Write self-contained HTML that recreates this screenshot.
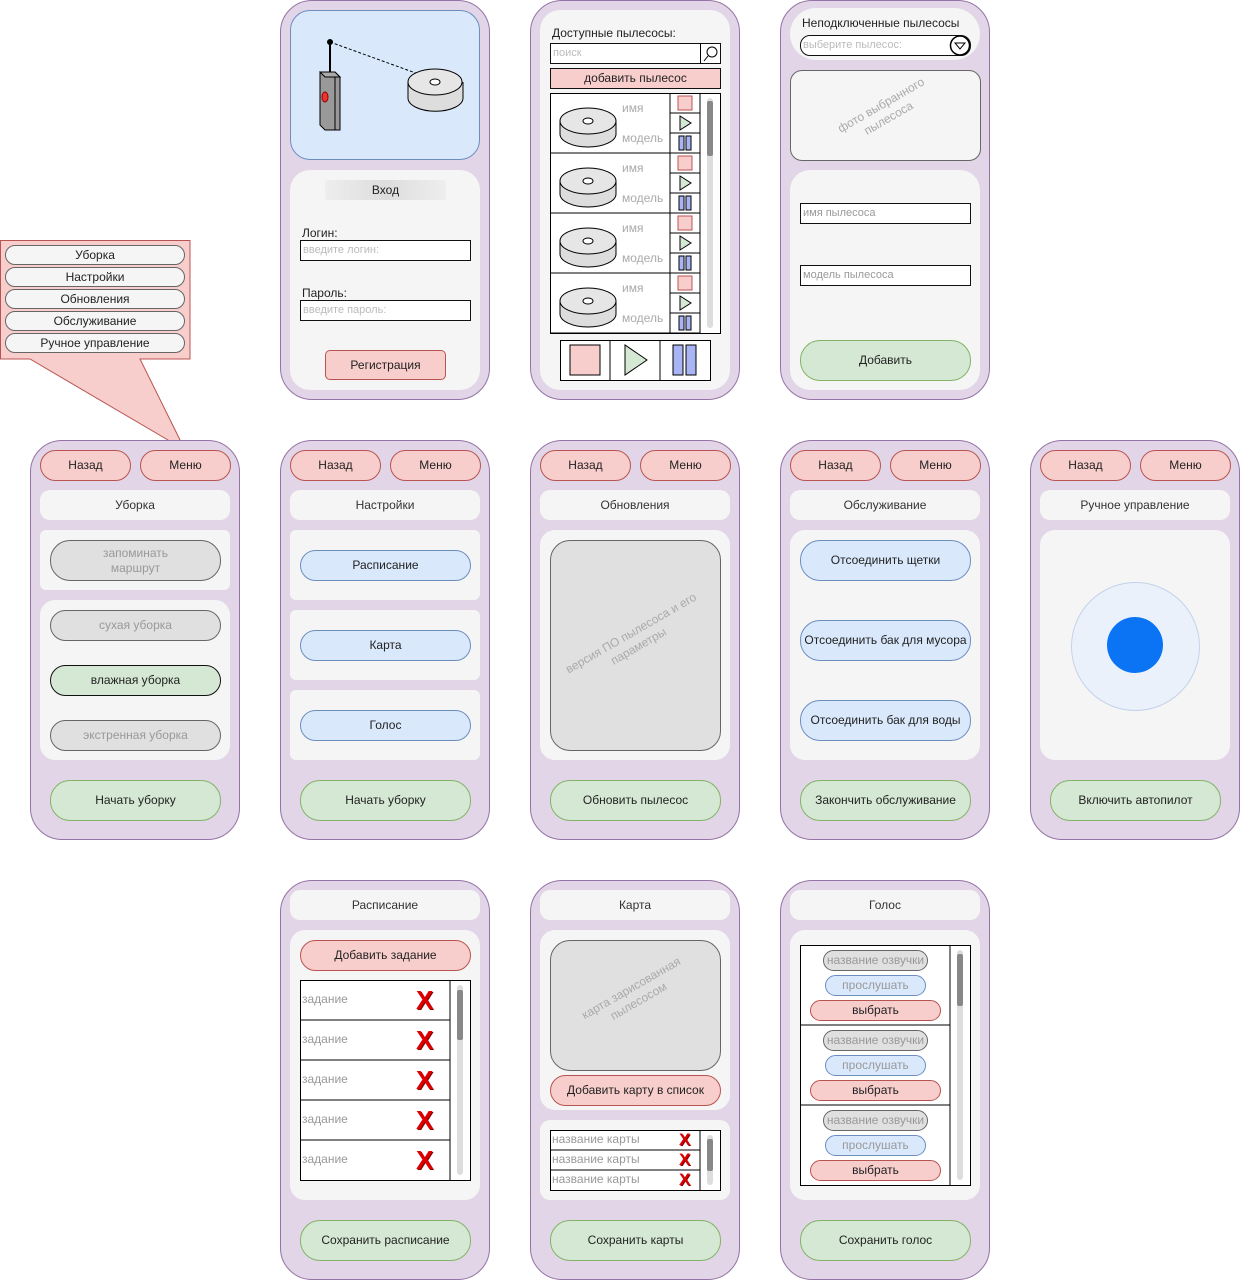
<!DOCTYPE html>
<html><head><meta charset="utf-8"><style>
body{margin:0;width:1241px;height:1281px;background:#fff;position:relative;overflow:hidden;font-family:"Liberation Sans","Noto Sans CJK SC",sans-serif;font-size:12px;color:#222}
.a{position:absolute;box-sizing:border-box;display:flex;align-items:center;justify-content:center;text-align:center;line-height:15px}
.ph{background:#e1d5e7;border:1.5px solid #9673a6;border-radius:32px;width:210px;height:400px}
.pn{background:#f5f5f5;border-radius:12px}
.r{background:#f8cecc;border:1px solid #b85450;border-radius:20px}
.g{background:#d5e8d4;border:1px solid #82b366;border-radius:20px}
.b{background:#dae8fc;border:1px solid #6c8ebf;border-radius:20px}
.gr{background:#e0e0e0;border:1px solid #666;border-radius:20px;color:#999}
.t{background:#f5f5f5;border-radius:10px;color:#333}
.in{background:#fff;border:1.5px solid #111;justify-content:flex-start;color:#bbb;padding-left:2px;font-size:11px}
.bx{background:#fff;border:1px solid #111}
.x{color:#d00;font-weight:bold;font-size:26px;font-family:"Liberation Sans",sans-serif;text-shadow:1px 1px 0 #800}
.ph2{justify-content:flex-start;color:#999}
</style></head><body>

<svg class="a" style="left:0;top:240px" width="200" height="212"><polygon points="0.5,0.5 190,0.5 190,119 140,119 185,210 30,119 0.5,119" fill="#f8cecc" stroke="#b85450"/></svg>
<div class="a" style="left:5px;top:245px;width:180px;height:20px;background:#f5f5f5;border:1px solid #666;border-radius:10px">Уборка</div>
<div class="a" style="left:5px;top:267px;width:180px;height:20px;background:#f5f5f5;border:1px solid #666;border-radius:10px">Настройки</div>
<div class="a" style="left:5px;top:289px;width:180px;height:20px;background:#f5f5f5;border:1px solid #666;border-radius:10px">Обновления</div>
<div class="a" style="left:5px;top:311px;width:180px;height:20px;background:#f5f5f5;border:1px solid #666;border-radius:10px">Обслуживание</div>
<div class="a" style="left:5px;top:333px;width:180px;height:20px;background:#f5f5f5;border:1px solid #666;border-radius:10px">Ручное управление</div>

<div class="a ph" style="left:280px;top:0"></div>
<div class="a" style="left:290px;top:10px;width:190px;height:150px;background:#dae8fc;border:1px solid #6c8ebf;border-radius:20px"></div>
<svg class="a" style="left:290px;top:10px" width="190" height="150">
<line x1="40" y1="32" x2="145" y2="70" stroke="#000" stroke-dasharray="3,2"/>
<line x1="40" y1="32" x2="40" y2="62" stroke="#000" stroke-width="2"/>
<circle cx="40" cy="32" r="3" fill="#000"/>
<polygon points="30,62 45,62 50,67 50,120 35,120 30,115" fill="#999" stroke="#000"/>
<line x1="45" y1="62" x2="45" y2="120" stroke="#000"/><polygon points="30,62 45,62 50,67 35,67" fill="#aaa" stroke="#000"/>
<ellipse cx="35" cy="87" rx="3" ry="5" fill="#e33" stroke="#900"/>
<path d="M118 72 v16 a27 13 0 0 0 55 0 v-16" fill="#ddd" stroke="#000"/>
<ellipse cx="145" cy="72" rx="27" ry="13" fill="#e6e6e6" stroke="#000"/>
<ellipse cx="145" cy="72" rx="5" ry="3" fill="#fff" stroke="#000"/>
</svg>
<div class="a pn" style="left:290px;top:170px;width:190px;height:220px;border-radius:20px"></div>
<div class="a" style="left:325px;top:180px;width:121px;height:20px;background:linear-gradient(90deg,#eee,#ddd 50%,#eee);border-radius:3px">Вход</div>
<div class="a" style="left:302px;top:226px;justify-content:flex-start">Логин:</div>
<div class="a in" style="left:300px;top:240px;width:171px;height:21px">введите логин:</div>
<div class="a" style="left:302px;top:286px;justify-content:flex-start">Пароль:</div>
<div class="a in" style="left:300px;top:300px;width:171px;height:21px">введите пароль:</div>
<div class="a r" style="left:325px;top:350px;width:121px;height:30px;border-radius:5px">Регистрация</div>

<div class="a ph" style="left:530px;top:0"></div>
<div class="a pn" style="left:540px;top:10px;width:190px;height:380px;border-radius:20px"></div>
<div class="a" style="left:552px;top:26px">Доступные пылесосы:</div>
<div class="a in" style="left:550px;top:43px;width:171px;height:21px">поиск</div>
<svg class="a" style="left:700px;top:43px" width="21" height="21"><line x1="0.5" y1="0" x2="0.5" y2="21" stroke="#000"/><circle cx="12" cy="9" r="5" fill="none" stroke="#000"/><line x1="8" y1="13" x2="4" y2="18" stroke="#000"/></svg>
<div class="a" style="left:550px;top:68px;width:171px;height:21px;background:#f8cecc;border:1.5px solid #111">добавить пылесос</div>
<svg class="a" style="left:550px;top:93px" width="171" height="241">
<rect x="0.5" y="0.5" width="170" height="240" fill="#fff" stroke="#000"/>
<line x1="120" y1="0" x2="120" y2="240" stroke="#000"/><line x1="150" y1="0" x2="150" y2="240" stroke="#000"/>
<rect x="157" y="5" width="6" height="230" rx="3" fill="#ddd"/><rect x="157" y="8" width="6" height="55" rx="2" fill="#888"/>
<g id="row"><line x1="0" y1="60" x2="150" y2="60" stroke="#000"/><line x1="120" y1="20" x2="150" y2="20" stroke="#000"/><line x1="120" y1="40" x2="150" y2="40" stroke="#000"/>
<path d="M10 28 v13 a28 13 0 0 0 56 0 v-13" fill="#ddd" stroke="#000"/><ellipse cx="38" cy="28" rx="28" ry="13" fill="#e6e6e6" stroke="#000"/><ellipse cx="38" cy="28" rx="5" ry="3" fill="#fff" stroke="#000"/>
<text x="72" y="19" fill="#aaa" font-size="12" font-family="Liberation Sans">имя</text><text x="72" y="49" fill="#aaa" font-size="12" font-family="Liberation Sans">модель</text>
<rect x="128" y="3" width="14" height="14" fill="#f8cecc" stroke="#b85450"/><polygon points="130,23 130,37 141,30" fill="#d5e8d4" stroke="#000"/>
<rect x="129" y="43" width="5" height="14" fill="#a9b4f5" stroke="#000"/><rect x="136" y="43" width="5" height="14" fill="#a9b4f5" stroke="#000"/></g>
<use href="#row" y="60"/><use href="#row" y="120"/><use href="#row" y="180"/>
</svg>
<svg class="a" style="left:560px;top:340px" width="151" height="41">
<rect x="0.5" y="0.5" width="150" height="40" fill="#fff" stroke="#000"/><line x1="50" y1="0" x2="50" y2="40" stroke="#000"/><line x1="100" y1="0" x2="100" y2="40" stroke="#000"/>
<rect x="10" y="5" width="30" height="30" fill="#f8cecc" stroke="#000"/><polygon points="65,5 65,35 87,20" fill="#d5e8d4" stroke="#000"/>
<rect x="113" y="5" width="10" height="30" fill="#a9b4f5" stroke="#000"/><rect x="126" y="5" width="10" height="30" fill="#a9b4f5" stroke="#000"/>
</svg>

<div class="a ph" style="left:780px;top:0"></div>
<div class="a pn" style="left:790px;top:8px;width:190px;height:52px;border-radius:26px"></div>
<div class="a" style="left:802px;top:16px">Неподключенные пылесосы</div>
<div class="a in" style="left:800px;top:35px;width:171px;height:21px;border-radius:10px">выберите пылесос:</div>
<svg class="a" style="left:949px;top:35px" width="22" height="21"><circle cx="11" cy="10.5" r="9.5" fill="#fff" stroke="#000" stroke-width="1.5"/><polygon points="6,8 16,8 11,14" fill="none" stroke="#000"/></svg>
<div class="a pn" style="left:790px;top:70px;width:191px;height:91px;border:1px solid #666;border-radius:12px"></div>
<div class="a" style="left:820px;top:92px;width:130px;height:40px;color:#aaa;transform:rotate(-30deg)">фото выбранного<br>пылесоса</div>
<div class="a pn" style="left:790px;top:170px;width:190px;height:220px;border-radius:20px"></div>
<div class="a in" style="left:800px;top:203px;width:171px;height:21px;color:#999">имя пылесоса</div>
<div class="a in" style="left:800px;top:265px;width:171px;height:21px;color:#999">модель пылесоса</div>
<div class="a g" style="left:800px;top:340px;width:171px;height:41px">Добавить</div>

<div class="a ph" style="left:30px;top:440px"></div>
<div class="a r" style="left:40px;top:450px;width:91px;height:31px">Назад</div>
<div class="a r" style="left:140px;top:450px;width:91px;height:31px">Меню</div>
<div class="a t" style="left:40px;top:490px;width:190px;height:30px">Уборка</div>
<div class="a pn" style="left:40px;top:530px;width:190px;height:60px;border-radius:6px"></div>
<div class="a gr" style="left:50px;top:540px;width:171px;height:41px">запоминать<br>маршрут</div>
<div class="a pn" style="left:40px;top:600px;width:190px;height:160px;border-radius:15px"></div>
<div class="a gr" style="left:50px;top:610px;width:171px;height:31px">сухая уборка</div>
<div class="a g" style="left:50px;top:665px;width:171px;height:31px;border-color:#111">влажная уборка</div>
<div class="a gr" style="left:50px;top:720px;width:171px;height:31px">экстренная уборка</div>
<div class="a g" style="left:50px;top:780px;width:171px;height:41px">Начать уборку</div>

<div class="a ph" style="left:280px;top:440px"></div>
<div class="a r" style="left:290px;top:450px;width:91px;height:31px">Назад</div>
<div class="a r" style="left:390px;top:450px;width:91px;height:31px">Меню</div>
<div class="a t" style="left:290px;top:490px;width:190px;height:30px">Настройки</div>
<div class="a pn" style="left:290px;top:530px;width:190px;height:70px;border-radius:6px"></div>
<div class="a b" style="left:300px;top:550px;width:171px;height:31px">Расписание</div>
<div class="a pn" style="left:290px;top:610px;width:190px;height:70px;border-radius:6px"></div>
<div class="a b" style="left:300px;top:630px;width:171px;height:31px">Карта</div>
<div class="a pn" style="left:290px;top:690px;width:190px;height:70px;border-radius:6px"></div>
<div class="a b" style="left:300px;top:710px;width:171px;height:31px">Голос</div>
<div class="a g" style="left:300px;top:780px;width:171px;height:41px">Начать уборку</div>

<div class="a ph" style="left:530px;top:440px"></div>
<div class="a r" style="left:540px;top:450px;width:91px;height:31px">Назад</div>
<div class="a r" style="left:640px;top:450px;width:91px;height:31px">Меню</div>
<div class="a t" style="left:540px;top:490px;width:190px;height:30px">Обновления</div>
<div class="a pn" style="left:540px;top:530px;width:190px;height:230px;border-radius:15px"></div>
<div class="a" style="left:550px;top:540px;width:171px;height:211px;background:#e0e0e0;border:1px solid #666;border-radius:20px"></div>
<div class="a" style="left:555px;top:620px;width:160px;height:40px;color:#aaa;transform:rotate(-30deg)">версия ПО пылесоса и его параметры</div>
<div class="a g" style="left:550px;top:780px;width:171px;height:41px">Обновить пылесос</div>

<div class="a ph" style="left:780px;top:440px"></div>
<div class="a r" style="left:790px;top:450px;width:91px;height:31px">Назад</div>
<div class="a r" style="left:890px;top:450px;width:91px;height:31px">Меню</div>
<div class="a t" style="left:790px;top:490px;width:190px;height:30px">Обслуживание</div>
<div class="a pn" style="left:790px;top:530px;width:190px;height:230px;border-radius:15px"></div>
<div class="a b" style="left:800px;top:540px;width:171px;height:41px">Отсоединить щетки</div>
<div class="a b" style="left:800px;top:620px;width:171px;height:41px">Отсоединить бак для мусора</div>
<div class="a b" style="left:800px;top:700px;width:171px;height:41px">Отсоединить бак для воды</div>
<div class="a g" style="left:800px;top:780px;width:171px;height:41px">Закончить обслуживание</div>

<div class="a ph" style="left:1030px;top:440px"></div>
<div class="a r" style="left:1040px;top:450px;width:91px;height:31px">Назад</div>
<div class="a r" style="left:1140px;top:450px;width:91px;height:31px">Меню</div>
<div class="a t" style="left:1040px;top:490px;width:190px;height:30px">Ручное управление</div>
<div class="a pn" style="left:1040px;top:530px;width:190px;height:230px;border-radius:15px"></div>
<div class="a" style="left:1071px;top:582px;width:129px;height:129px;border-radius:50%;background:#eaf1fb;border:1px solid #c3d2ea"></div>
<div class="a" style="left:1107px;top:617px;width:56px;height:56px;border-radius:50%;background:#0a74f5"></div>
<div class="a g" style="left:1050px;top:780px;width:171px;height:41px">Включить автопилот</div>

<div class="a ph" style="left:280px;top:880px"></div>
<div class="a t" style="left:290px;top:890px;width:190px;height:30px">Расписание</div>
<div class="a pn" style="left:290px;top:930px;width:190px;height:270px;border-radius:15px"></div>
<div class="a r" style="left:300px;top:940px;width:171px;height:31px">Добавить задание</div>
<svg class="a" style="left:300px;top:980px" width="171" height="201">
<rect x="0.5" y="0.5" width="170" height="200" fill="#fff" stroke="#000"/><line x1="150" y1="0" x2="150" y2="200" stroke="#000"/>
<line x1="0" y1="40" x2="150" y2="40" stroke="#000"/><line x1="0" y1="80" x2="150" y2="80" stroke="#000"/><line x1="0" y1="120" x2="150" y2="120" stroke="#000"/><line x1="0" y1="160" x2="150" y2="160" stroke="#000"/>
<rect x="157" y="5" width="6" height="190" rx="3" fill="#ddd"/><rect x="157" y="10" width="6" height="50" rx="2" fill="#888"/>
</svg>
<div class="a ph2" style="left:302px;top:992px">задание</div><div class="a x" style="left:416px;top:993px">X</div>
<div class="a ph2" style="left:302px;top:1032px">задание</div><div class="a x" style="left:416px;top:1033px">X</div>
<div class="a ph2" style="left:302px;top:1072px">задание</div><div class="a x" style="left:416px;top:1073px">X</div>
<div class="a ph2" style="left:302px;top:1112px">задание</div><div class="a x" style="left:416px;top:1113px">X</div>
<div class="a ph2" style="left:302px;top:1152px">задание</div><div class="a x" style="left:416px;top:1153px">X</div>
<div class="a g" style="left:300px;top:1220px;width:171px;height:41px">Сохранить расписание</div>

<div class="a ph" style="left:530px;top:880px"></div>
<div class="a t" style="left:540px;top:890px;width:190px;height:30px">Карта</div>
<div class="a pn" style="left:540px;top:930px;width:190px;height:180px;border-radius:15px"></div>
<div class="a" style="left:550px;top:940px;width:171px;height:131px;background:#e0e0e0;border:1px solid #666;border-radius:20px"></div>
<div class="a" style="left:565px;top:975px;width:140px;height:40px;color:#aaa;transform:rotate(-30deg)">карта зарисованная пылесосом</div>
<div class="a r" style="left:550px;top:1075px;width:171px;height:31px">Добавить карту в список</div>
<div class="a pn" style="left:540px;top:1120px;width:190px;height:80px;border-radius:10px"></div>
<svg class="a" style="left:550px;top:1130px" width="171" height="61">
<rect x="0.5" y="0.5" width="170" height="60" fill="#fff" stroke="#000"/><line x1="150" y1="0" x2="150" y2="60" stroke="#000"/>
<line x1="0" y1="20" x2="150" y2="20" stroke="#000"/><line x1="0" y1="40" x2="150" y2="40" stroke="#000"/>
<rect x="157" y="5" width="6" height="50" rx="3" fill="#ddd"/><rect x="157" y="9" width="6" height="32" rx="2" fill="#888"/>
</svg>
<div class="a ph2" style="left:552px;top:1132px">название карты</div><div class="a x" style="left:679px;top:1132px;font-size:17px">X</div>
<div class="a ph2" style="left:552px;top:1152px">название карты</div><div class="a x" style="left:679px;top:1152px;font-size:17px">X</div>
<div class="a ph2" style="left:552px;top:1172px">название карты</div><div class="a x" style="left:679px;top:1172px;font-size:17px">X</div>
<div class="a g" style="left:550px;top:1220px;width:171px;height:41px">Сохранить карты</div>

<div class="a ph" style="left:780px;top:880px"></div>
<div class="a t" style="left:790px;top:890px;width:190px;height:30px">Голос</div>
<div class="a pn" style="left:790px;top:930px;width:190px;height:270px;border-radius:15px"></div>
<svg class="a" style="left:800px;top:945px" width="171" height="241">
<rect x="0.5" y="0.5" width="170" height="240" fill="#fff" stroke="#000"/><line x1="150" y1="0" x2="150" y2="240" stroke="#000"/>
<line x1="0" y1="80" x2="150" y2="80" stroke="#000"/><line x1="0" y1="160" x2="150" y2="160" stroke="#000"/>
<rect x="157" y="5" width="6" height="230" rx="3" fill="#ddd"/><rect x="157" y="9" width="6" height="52" rx="2" fill="#888"/>
</svg>
<div class="a gr" style="left:823px;top:950px;width:105px;height:21px">название озвучки</div>
<div class="a b" style="left:825px;top:975px;width:101px;height:21px;color:#999">прослушать</div>
<div class="a r" style="left:810px;top:1000px;width:131px;height:21px">выбрать</div>
<div class="a gr" style="left:823px;top:1030px;width:105px;height:21px">название озвучки</div>
<div class="a b" style="left:825px;top:1055px;width:101px;height:21px;color:#999">прослушать</div>
<div class="a r" style="left:810px;top:1080px;width:131px;height:21px">выбрать</div>
<div class="a gr" style="left:823px;top:1110px;width:105px;height:21px">название озвучки</div>
<div class="a b" style="left:825px;top:1135px;width:101px;height:21px;color:#999">прослушать</div>
<div class="a r" style="left:810px;top:1160px;width:131px;height:21px">выбрать</div>
<div class="a g" style="left:800px;top:1220px;width:171px;height:41px">Сохранить голос</div>

</body></html>
